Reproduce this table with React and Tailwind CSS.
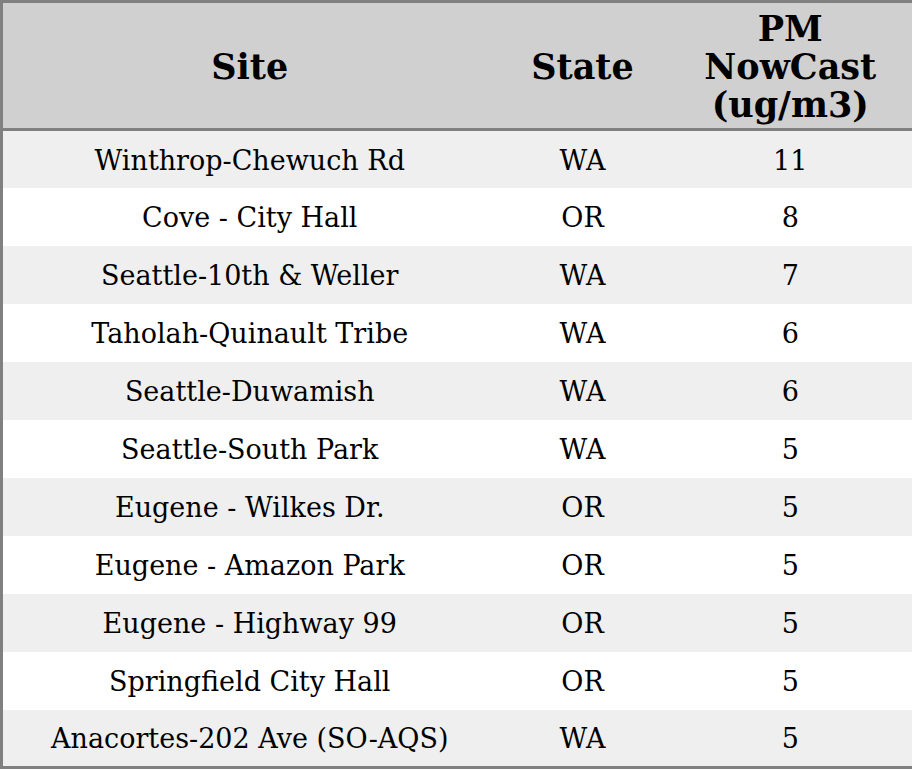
const rows = [
  { site: "Winthrop-Chewuch Rd", state: "WA", pm: 11 },
  { site: "Cove - City Hall", state: "OR", pm: 8 },
  { site: "Seattle-10th & Weller", state: "WA", pm: 7 },
  { site: "Taholah-Quinault Tribe", state: "WA", pm: 6 },
  { site: "Seattle-Duwamish", state: "WA", pm: 6 },
  { site: "Seattle-South Park", state: "WA", pm: 5 },
  { site: "Eugene - Wilkes Dr.", state: "OR", pm: 5 },
  { site: "Eugene - Amazon Park", state: "OR", pm: 5 },
  { site: "Eugene - Highway 99", state: "OR", pm: 5 },
  { site: "Springfield City Hall", state: "OR", pm: 5 },
  { site: "Anacortes-202 Ave (SO-AQS)", state: "WA", pm: 5 },
]

export default function App() {
  return (
    <div className="w-[912px] h-[769px] bg-white font-['DejaVu_Serif',serif] text-black">
      <table className="w-[912px] border-[3px] border-[#808080] border-collapse table-fixed">
        <colgroup>
          <col className="w-[495px]" />
          <col className="w-[172px]" />
          <col className="w-[245px]" />
        </colgroup>
        <thead>
          <tr className="bg-[#d0d0d0] h-[128px] border-b-[3px] border-[#808080]">
            <th className="text-[35px] font-bold text-center align-middle pt-[3px]">Site</th>
            <th className="text-[35px] font-bold text-center align-middle pt-[3px]">State</th>
            <th className="text-[35px] font-bold text-center align-middle leading-[38px] pt-[2px]">
              PM<br />NowCast<br />(ug/m3)
            </th>
          </tr>
        </thead>
        <tbody>
          {rows.map((r, i) => (
            <tr key={r.site} className={`h-[58px] text-[27px] ${i % 2 === 0 ? "bg-[#efefef]" : "bg-white"}`}>
              <td className="text-center pt-[3px]">{r.site}</td>
              <td className="text-center pt-[3px]">{r.state}</td>
              <td className="text-center pt-[3px]">{r.pm}</td>
            </tr>
          ))}
        </tbody>
      </table>
    </div>
  )
}
